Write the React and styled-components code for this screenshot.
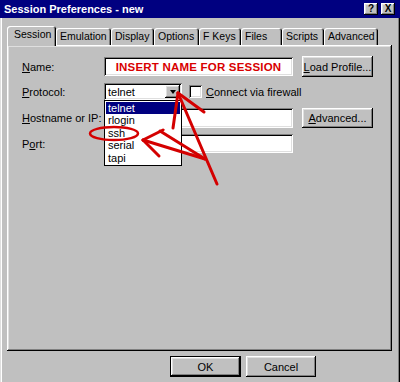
import React from 'react';
import styled, { createGlobalStyle } from 'styled-components';

const Global = createGlobalStyle`
  html, body { margin: 0; padding: 0; background: #c0c0c0; }
  body { font-family: "Liberation Sans", Arial, sans-serif; font-size: 11px; color: #000; }
  u { text-decoration: underline; text-underline-offset: 1px; }
`;

const raised = `
  box-shadow: inset -1px -1px #000, inset 1px 1px #fff, inset -2px -2px #808080, inset 2px 2px #dfdfdf;
`;
const sunken = `
  box-shadow: inset 1px 1px #808080, inset -1px -1px #fff, inset 2px 2px #000, inset -2px -2px #dfdfdf;
`;

const Window = styled.div`
  position: relative;
  width: 400px;
  height: 382px;
  background: #c0c0c0;
  display: flex;
  flex-direction: column;
  overflow: hidden;
`;

const TitleBar = styled.div`
  height: 18px;
  flex: none;
  background: #000080;
  display: flex;
  align-items: center;
  justify-content: space-between;
  padding: 0 5px 0 4px;
`;

const Title = styled.div`
  color: #fff;
  font-weight: bold;
  font-size: 11px;
`;

const TitleButtons = styled.div`
  display: flex;
  gap: 3px;
`;

const TitleButton = styled.div`
  width: 14px;
  height: 12px;
  background: #c0c0c0;
  ${raised}
  display: flex;
  align-items: center;
  justify-content: center;
  font-weight: bold;
  font-size: 10px;
  line-height: 1;
`;

const Body = styled.div`
  flex: 1;
  display: flex;
  flex-direction: column;
  padding: 8px 8px 0 7px;
  box-shadow: inset 1px 0 #dfdfdf, inset 2px 0 #fff, inset -1px 0 #000, inset -2px 0 #808080;
`;

const TabRow = styled.div`
  display: flex;
  align-items: flex-end;
  height: 19px;
  padding-left: 1px;
  position: relative;
  z-index: 2;
`;

const Tab = styled.div`
  width: ${p => p.$w}px;
  height: ${p => (p.$active ? 20 : 17)}px;
  margin-bottom: ${p => (p.$active ? -1 : 0)}px;
  margin-left: ${p => (p.$active ? -1 : 0)}px;
  padding-left: ${p => (p.$active ? 7 : 4)}px;
  padding-top: 2px;
  box-sizing: border-box;
  background: #c0c0c0;
  border-radius: 3px 3px 0 0;
  box-shadow: inset 1px 1px #fff, inset -1px 0 #000, inset -2px 0 #808080;
  display: flex;
  align-items: flex-start;
  white-space: nowrap;
  line-height: 13px;
  font-size: 10.5px;
`;

const Panel = styled.div`
  width: 385px;
  height: 306px;
  box-sizing: border-box;
  background: #c0c0c0;
  ${raised}
  padding: 11px 0 0 15px;
  display: flex;
  flex-direction: column;
`;

const Row = styled.div`
  display: flex;
  align-items: center;
  height: ${p => p.$h}px;
  margin-top: ${p => p.$mt || 0}px;
`;

const Label = styled.div`
  width: 82px;
  flex: none;
`;

const TextField = styled.div`
  width: 189px;
  height: ${p => p.$h}px;
  box-sizing: border-box;
  background: #fff;
  ${sunken}
  display: flex;
  align-items: center;
  justify-content: center;
`;

const Placeholder = styled.span`
  color: #d80000;
  font-weight: bold;
  font-size: 11.5px;
  letter-spacing: 0.2px;
`;

const Button = styled.div`
  width: ${p => p.$w || 71}px;
  height: ${p => p.$h || 21}px;
  margin-left: ${p => p.$ml || 0}px;
  box-sizing: border-box;
  background: #c0c0c0;
  ${raised}
  display: flex;
  align-items: center;
  justify-content: center;
  font-size: 11px;
`;

const DefaultButton = styled(Button)`
  box-shadow: inset 0 0 0 1px #000, inset -2px -2px #000, inset 2px 2px #fff, inset -3px -3px #808080, inset 3px 3px #dfdfdf;
`;

const Select = styled.div`
  position: relative;
  width: 78px;
  height: 17px;
  box-sizing: border-box;
  background: #fff;
  ${sunken}
  display: flex;
  align-items: center;
  padding: 0 2px 0 4px;
  justify-content: space-between;
`;

const DropButton = styled.div`
  width: 15px;
  height: 13px;
  background: #c0c0c0;
  ${raised}
  display: flex;
  align-items: center;
  justify-content: center;
`;

const Arrow = styled.div`
  width: 0;
  height: 0;
  border-left: 3.5px solid transparent;
  border-right: 3.5px solid transparent;
  border-top: 4px solid #000;
`;

const List = styled.div`
  position: absolute;
  top: 100%;
  left: 0;
  width: 78px;
  box-sizing: border-box;
  background: #fff;
  border: 1px solid #000;
  padding: 1px 0;
  z-index: 3;
`;

const Item = styled.div`
  height: 12.4px;
  line-height: 12px;
  padding-left: 2px;
  margin: 0 1px;
  background: ${p => (p.$sel ? '#000080' : 'transparent')};
  color: ${p => (p.$sel ? '#fff' : '#000')};
`;

const Check = styled.div`
  width: 13px;
  height: 13px;
  box-sizing: border-box;
  background: #fff;
  ${sunken}
  margin-left: 7px;
  margin-right: 4px;
`;

const Footer = styled.div`
  display: flex;
  justify-content: flex-end;
  gap: 5px;
  padding-right: 76px;
  margin-top: 5px;
`;

const Overlay = styled.svg`
  position: absolute;
  left: 0;
  top: 0;
  pointer-events: none;
  z-index: 10;
`;

const tabs = [
  ['Session', 49, true],
  ['Emulation', 55],
  ['Display', 43],
  ['Options', 45],
  ['F Keys', 42],
  ['Files', 41],
  ['Scripts', 42],
  ['Advanced', 54],
];

export default function App() {
  return (
    <>
      <Global />
      <Window>
        <TitleBar>
          <Title>Session Preferences - new</Title>
          <TitleButtons>
            <TitleButton>?</TitleButton>
            <TitleButton>X</TitleButton>
          </TitleButtons>
        </TitleBar>
        <Body>
          <TabRow>
            {tabs.map(([t, w, a]) => (
              <Tab key={t} $w={w} $active={a}>{t}</Tab>
            ))}
          </TabRow>
          <Panel>
            <Row $h={21}>
              <Label><u>N</u>ame:</Label>
              <TextField $h={19}><Placeholder>INSERT NAME FOR SESSION</Placeholder></TextField>
              <Button $ml={9}><u>L</u>oad Profile...</Button>
            </Row>
            <Row $h={17} $mt={6}>
              <Label><u>P</u>rotocol:</Label>
              <Select>
                <span>telnet</span>
                <DropButton><Arrow /></DropButton>
                <List>
                  <Item $sel>telnet</Item>
                  <Item>rlogin</Item>
                  <Item>ssh</Item>
                  <Item>serial</Item>
                  <Item>tapi</Item>
                </List>
              </Select>
              <Check />
              <span><u>C</u>onnect via firewall</span>
            </Row>
            <Row $h={20} $mt={8}>
              <Label><u>H</u>ostname or IP:</Label>
              <TextField $h={20} />
              <Button $ml={9} $h={20}><u>A</u>dvanced...</Button>
            </Row>
            <Row $h={19} $mt={6}>
              <Label>P<u>o</u>rt:</Label>
              <TextField $h={19} />
            </Row>
          </Panel>
          <Footer>
            <DefaultButton $w={71}>OK</DefaultButton>
            <Button $w={70}>Cancel</Button>
          </Footer>
        </Body>
        <Overlay width="400" height="382" viewBox="0 0 400 382">
          <g fill="none" stroke="#d40000" strokeWidth="3" strokeLinecap="round" strokeLinejoin="round">
            <path d="M178 93 L217 184" />
            <path d="M178 93 L204 112" />
            <path d="M178 93 L173 128" />
            <path d="M143 140 L163 130" />
            <path d="M160 131 L205 159" />
            <path d="M143 140 L159 156" />
            <path d="M143 140 L205 159" />
            <ellipse cx="114" cy="133.5" rx="24" ry="6.5" strokeWidth="2.5" />
          </g>
        </Overlay>
      </Window>
    </>
  );
}
